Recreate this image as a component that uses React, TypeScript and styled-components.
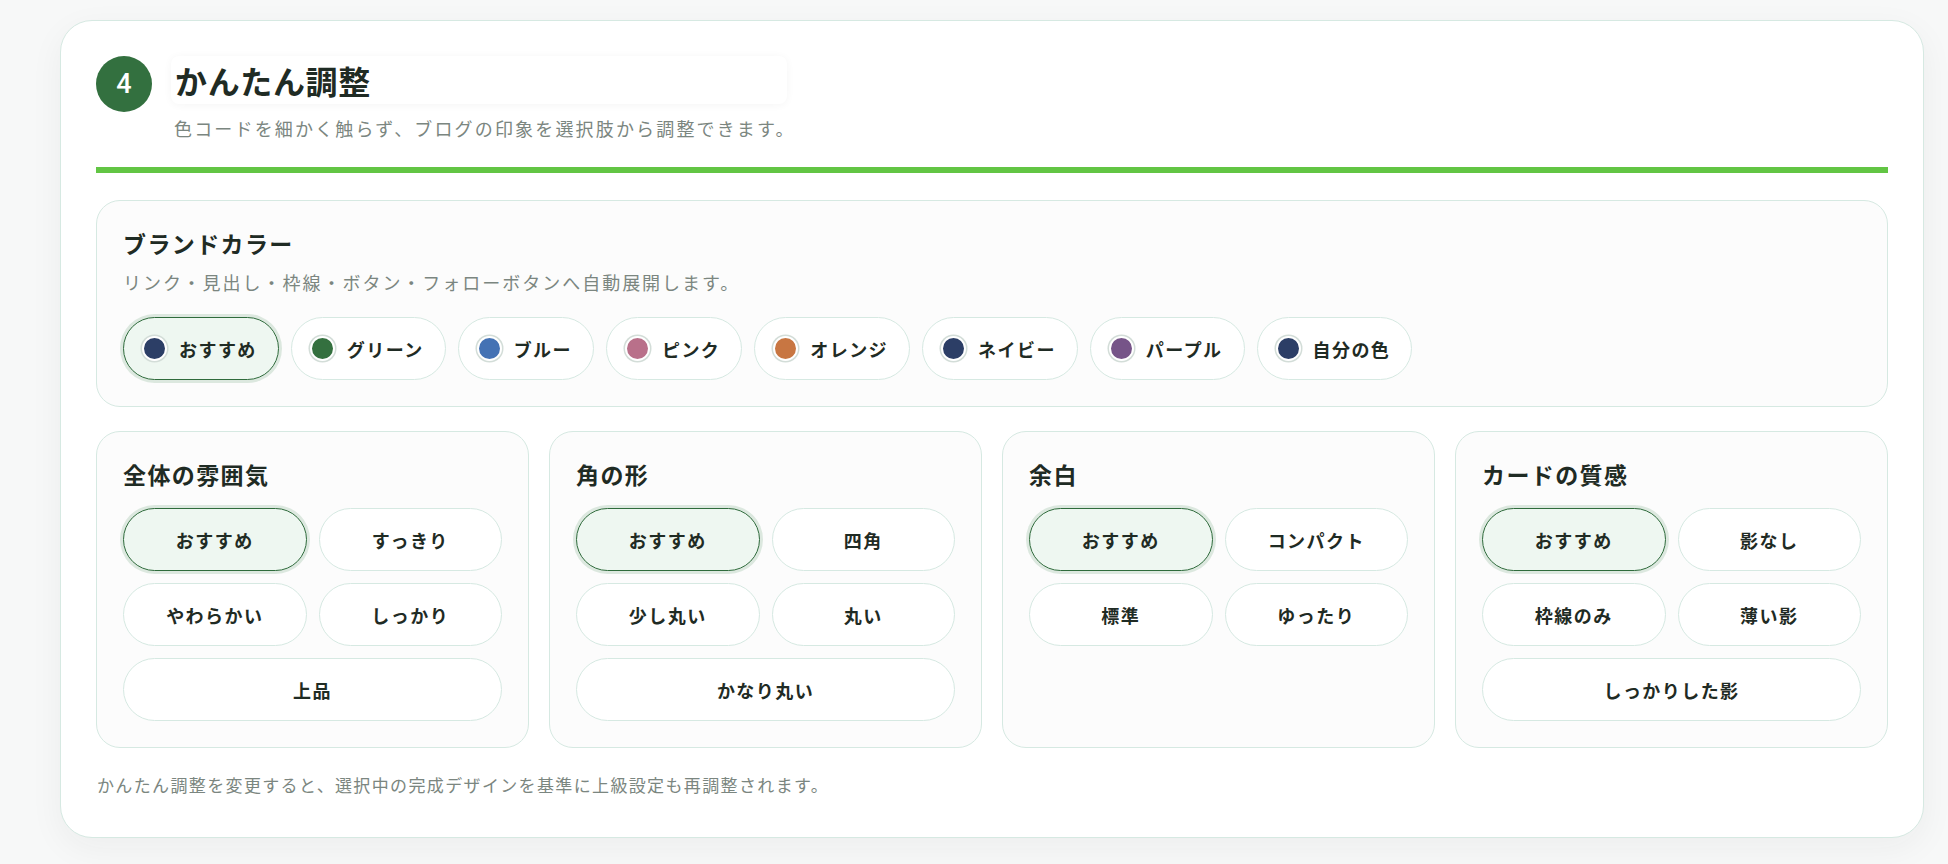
import styled, { createGlobalStyle } from 'styled-components';

type Swatch = { label: string; color: string };

const brandColors: Swatch[] = [
  { label: 'おすすめ', color: '#2c3e66' },
  { label: 'グリーン', color: '#34703f' },
  { label: 'ブルー', color: '#4472b4' },
  { label: 'ピンク', color: '#b9708a' },
  { label: 'オレンジ', color: '#c87642' },
  { label: 'ネイビー', color: '#2c3e66' },
  { label: 'パープル', color: '#765488' },
  { label: '自分の色', color: '#2c3e66' },
];

const groups = [
  { title: '全体の雰囲気', options: ['おすすめ', 'すっきり', 'やわらかい', 'しっかり', '上品'] },
  { title: '角の形', options: ['おすすめ', '四角', '少し丸い', '丸い', 'かなり丸い'] },
  { title: '余白', options: ['おすすめ', 'コンパクト', '標準', 'ゆったり'] },
  { title: 'カードの質感', options: ['おすすめ', '影なし', '枠線のみ', '薄い影', 'しっかりした影'] },
];

export default function App() {
  return (
    <>
      <GlobalStyle />
      <Page>
        <Panel>
          <Header>
            <StepBadge>4</StepBadge>
            <HeaderText>
              <Title>かんたん調整</Title>
              <Lead>色コードを細かく触らず、ブログの印象を選択肢から調整できます。</Lead>
            </HeaderText>
          </Header>

          <BrandCard>
            <CardTitle>ブランドカラー</CardTitle>
            <CardDesc>リンク・見出し・枠線・ボタン・フォローボタンへ自動展開します。</CardDesc>
            <ChipRow>
              {brandColors.map((c, idx) => (
                <Chip key={c.label} $active={idx === 0}>
                  <Dot $color={c.color} />
                  {c.label}
                </Chip>
              ))}
            </ChipRow>
          </BrandCard>

          <Grid>
            {groups.map((g) => (
              <OptionCard key={g.title}>
                <CardTitle>{g.title}</CardTitle>
                <OptionGrid>
                  {g.options.map((o, idx) => (
                    <Option
                      key={o}
                      $active={idx === 0}
                      $wide={idx === 4}
                    >
                      {o}
                    </Option>
                  ))}
                </OptionGrid>
              </OptionCard>
            ))}
          </Grid>

          <Note>かんたん調整を変更すると、選択中の完成デザインを基準に上級設定も再調整されます。</Note>
        </Panel>
      </Page>
    </>
  );
}

// Styles
const GlobalStyle = createGlobalStyle`
    * {
        box-sizing: border-box;
    }
    body {
        margin: 0;
        background: #f7f8f8;
        font-family: "Noto Sans CJK JP", "Noto Sans", sans-serif;
        color: #1f2b24;
    }
`;

const Page = styled.div`
    padding: 20px 24px 26px 60px;
`;

const Panel = styled.section`
    background: #fff;
    border: 1px solid #d6e9e2;
    border-radius: 32px;
    padding: 35px 35px 38px;
    box-shadow: 0 10px 34px rgba(30, 45, 40, 0.05);
`;

const Header = styled.header`
    display: flex;
    align-items: flex-start;
    gap: 19px;
    padding-bottom: 25px;
    border-bottom: 6px solid #62c544;
`;

const StepBadge = styled.div`
    flex: none;
    width: 56px;
    height: 56px;
    border-radius: 50%;
    background: #33703f;
    color: #fff;
    display: flex;
    align-items: center;
    justify-content: center;
    font-family: Roboto, "Noto Sans", sans-serif;
    font-size: 27px;
    font-weight: 500;
`;

const HeaderText = styled.div`
    display: flex;
    flex-direction: column;
    gap: 10px;
`;

const Title = styled.h1`
    margin: 0;
    width: 616px;
    height: 48px;
    padding: 0 4px;
    font-size: 32px;
    line-height: 48px;
    font-weight: 700;
    letter-spacing: 0.02em;
    color: #1f2b24;
    background: #fff;
    border-radius: 8px;
    box-shadow: 0 1px 8px rgba(0, 0, 0, 0.045);
`;

const Lead = styled.p`
    margin: 0;
    padding-left: 3px;
    font-size: 18px;
    line-height: 28px;
    letter-spacing: 0.12em;
    color: #7b8680;
`;

const CardBase = styled.div`
    background: #fcfcfc;
    border: 1px solid #d6e9e2;
    border-radius: 24px;
    padding: 26px;
`;

const BrandCard = styled(CardBase)`
    margin-top: 27px;
`;

const CardTitle = styled.h2`
    margin: 0;
    font-size: 23px;
    line-height: 33px;
    font-weight: 700;
    letter-spacing: 0.06em;
    color: #1f2b24;
`;

const CardDesc = styled.p`
    margin: 8px 0 0;
    font-size: 18px;
    line-height: 28px;
    letter-spacing: 0.11em;
    color: #7b8680;
`;

const ChipRow = styled.div`
    display: flex;
    flex-wrap: wrap;
    gap: 12px;
    margin-top: 21px;
`;

const Chip = styled.button<{ $active?: boolean }>`
    display: inline-flex;
    align-items: center;
    gap: 12px;
    height: 63px;
    padding: 0 21px 0 18px;
    border-radius: 999px;
    font-family: inherit;
    font-size: 18px;
    font-weight: 700;
    letter-spacing: 0.08em;
    color: #1f2b24;
    background: ${({ $active }) => ($active ? '#eef7f1' : '#fff')};
    border: ${({ $active }) => ($active ? '1.5px solid #2f6b3c' : '1px solid #d6e9e2')};
    box-shadow: ${({ $active }) => ($active ? '0 0 0 3px #dce8df' : 'none')};
`;

const Dot = styled.span<{ $color: string }>`
    flex: none;
    width: 25px;
    height: 25px;
    border-radius: 50%;
    background: ${({ $color }) => $color};
    border: 2.5px solid #fff;
    box-shadow: 0 0 0 1.5px #d3ddd8;
`;

const Grid = styled.div`
    display: grid;
    grid-template-columns: repeat(4, 1fr);
    gap: 20px;
    margin-top: 24px;
`;

const OptionCard = styled(CardBase)``;

const OptionGrid = styled.div`
    display: grid;
    grid-template-columns: 1fr 1fr;
    gap: 12px;
    margin-top: 17px;
`;

const Option = styled.button<{ $active?: boolean; $wide?: boolean }>`
    grid-column: ${({ $wide }) => ($wide ? '1 / -1' : 'auto')};
    height: 63px;
    border-radius: 999px;
    font-family: inherit;
    font-size: 18px;
    font-weight: 700;
    letter-spacing: 0.08em;
    color: #1f2b24;
    background: ${({ $active }) => ($active ? '#eef7f1' : '#fff')};
    border: ${({ $active }) => ($active ? '1.5px solid #2f6b3c' : '1px solid #d6e9e2')};
    box-shadow: ${({ $active }) => ($active ? '0 0 0 3px #dce8df' : 'none')};
`;

const Note = styled.p`
    margin: 23px 0 0;
    padding-left: 1px;
    font-size: 17px;
    line-height: 28px;
    letter-spacing: 0.08em;
    color: #7b8680;
`;
